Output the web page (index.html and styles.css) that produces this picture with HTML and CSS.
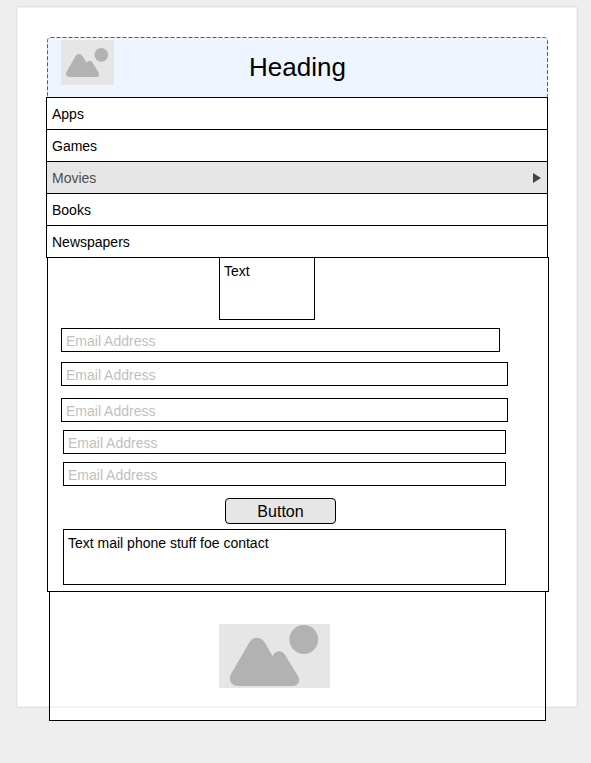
FILE: index.html
```html
<!DOCTYPE html>
<html lang="en">
<head>
<meta charset="utf-8">
<title>Heading</title>
<link rel="stylesheet" href="styles.css">
</head>
<body>
<main class="sheet">
  <header class="header">
    <svg class="outline" aria-hidden="true"><rect x="0.5" y="0.5" width="100%" height="100%" rx="3"/></svg>
    <svg class="logo" viewBox="0 0 53 45" aria-hidden="true">
      <path class="shape" d="M5.500 32L14.300 16.500C16.300 13.200 19.700 13.200 21.700 16.500L25.500 22.800C27.200 20 30 20 31.500 22.500L37.500 32.500C39 35 37.500 37 35.500 37H9C5.500 37 4.200 34.300 5.500 32Z"/>
      <circle class="shape" cx="40.300" cy="14.800" r="6.900"/>
    </svg>
    <h1 class="title">Heading</h1>
  </header>
  <nav class="menu">
    <a class="item" href="#">Apps</a>
    <a class="item" href="#">Games</a>
    <a class="item active" href="#">Movies
      <svg class="arrow" viewBox="0 0 8 10" aria-hidden="true"><path d="M0 0L8 5L0 10Z"/></svg>
    </a>
    <a class="item" href="#">Books</a>
    <a class="item" href="#">Newspapers</a>
  </nav>
  <form class="form">
    <p class="note">Text</p>
    <input class="field short" type="email" placeholder="Email Address" aria-label="Email Address">
    <input class="field wide" type="email" placeholder="Email Address" aria-label="Email Address">
    <input class="field wide spaced" type="email" placeholder="Email Address" aria-label="Email Address">
    <input class="field" type="email" placeholder="Email Address" aria-label="Email Address">
    <input class="field" type="email" placeholder="Email Address" aria-label="Email Address">
    <button class="button" type="button">Button</button>
    <p class="contact">Text mail phone stuff foe contact</p>
  </form>
  <footer class="footer">
    <svg class="picture" viewBox="0 0 111 64" aria-hidden="true">
      <path class="shape" d="M12 50L30 19C34 12 42 12 46 19L53.500 32C57 26 63 26 66 31L79 52C82 57 79 62 74 62H20C12 62 9 56 12 50Z"/>
      <circle class="shape" cx="84.800" cy="15.500" r="14.400"/>
    </svg>
  </footer>
</main>
</body>
</html>
```
FILE: styles.css
```css
* { box-sizing: border-box; }

body {
  margin: 0;
  padding: 6px 13px 56px 16px;
  background: #eeeeee;
  color: #000;
  font: 14px/16px "Liberation Sans", Arial, sans-serif;
}

.sheet {
  padding: 29px 28px 0;
  background: #fff;
  border: 1px solid #e2e2e2;
  box-shadow: inset 0 0 0 1px #f2f2f2;
  border-radius: 2px;
}

.header {
  position: relative;
  display: grid;
  place-items: center;
  height: 61px;
  margin: 1px 1px 0 2px;
  padding-bottom: 2px;
  background: #eef5fe;
  border-radius: 3px;
}

.outline {
  position: absolute;
  inset: 0;
  width: calc(100% - 1px);
  height: 100%;
  overflow: visible;
  fill: none;
  stroke: #0b6bdc;
  stroke-dasharray: 4 2;
}

.logo {
  position: absolute;
  left: 14px;
  top: 3px;
  width: 53px;
  height: 45px;
  background: #e6e6e6;
}

.shape { fill: #b2b2b2; }

.title {
  margin: 0;
  font-size: 26px;
  font-weight: 400;
  line-height: 30px;
}

.menu {
  position: relative;
  margin: -1px 1px 0;
  border: 1px solid #000;
  background: #fff;
}

.item {
  display: flex;
  align-items: center;
  justify-content: space-between;
  height: 32px;
  padding: 0 6px 0 5px;
  border-bottom: 1px solid #000;
  color: #000;
  text-decoration: none;
}

.item:last-child { height: 31px; border-bottom: 0; }

.active { background: #e6e6e6; color: #4d4d4d; }

.arrow { width: 8px; height: 10px; fill: #444; }

.form {
  position: relative;
  display: flex;
  flex-direction: column;
  margin: -1px 0 0 2px;
  padding-bottom: 6px;
  border: 1px solid #000;
}

.note {
  align-self: center;
  width: 96px;
  height: 63px;
  margin: -1px 62px 8px 0;
  padding: 5px 4px;
  border: 1px solid #000;
}

.field {
  height: 24px;
  margin: 0 42px 8px 15px;
  padding: 2px 4px 0;
  border: 1px solid #000;
  border-radius: 0;
  background: #fff;
  font: inherit;
}

.field::placeholder { color: #bfbfbf; opacity: 1; }

.short { margin: 0 48px 10px 13px; }

.wide { margin: 0 40px 12px 13px; }

.spaced { margin-bottom: 8px; }

.button {
  align-self: center;
  width: 111px;
  height: 26px;
  margin: 4px 35px 5px 0;
  padding: 2px 0 0;
  border: 1px solid #000;
  border-radius: 4px;
  background: #e6e6e6;
  color: #000;
  font: inherit;
  font-size: 16px;
}

.contact {
  min-height: 56px;
  margin: 0 42px 0 15px;
  padding: 5px 4px;
  border: 1px solid #000;
}

.footer {
  display: flex;
  justify-content: center;
  height: 130px;
  margin: -1px 3px -14px 4px;
  padding: 32px 46px 0 0;
  border: 1px solid #000;
  background: linear-gradient(#f2f2f2, #f2f2f2) 0 114px / 100% 2px no-repeat #fff;
}

.picture { width: 111px; height: 64px; background: #e6e6e6; }
```
